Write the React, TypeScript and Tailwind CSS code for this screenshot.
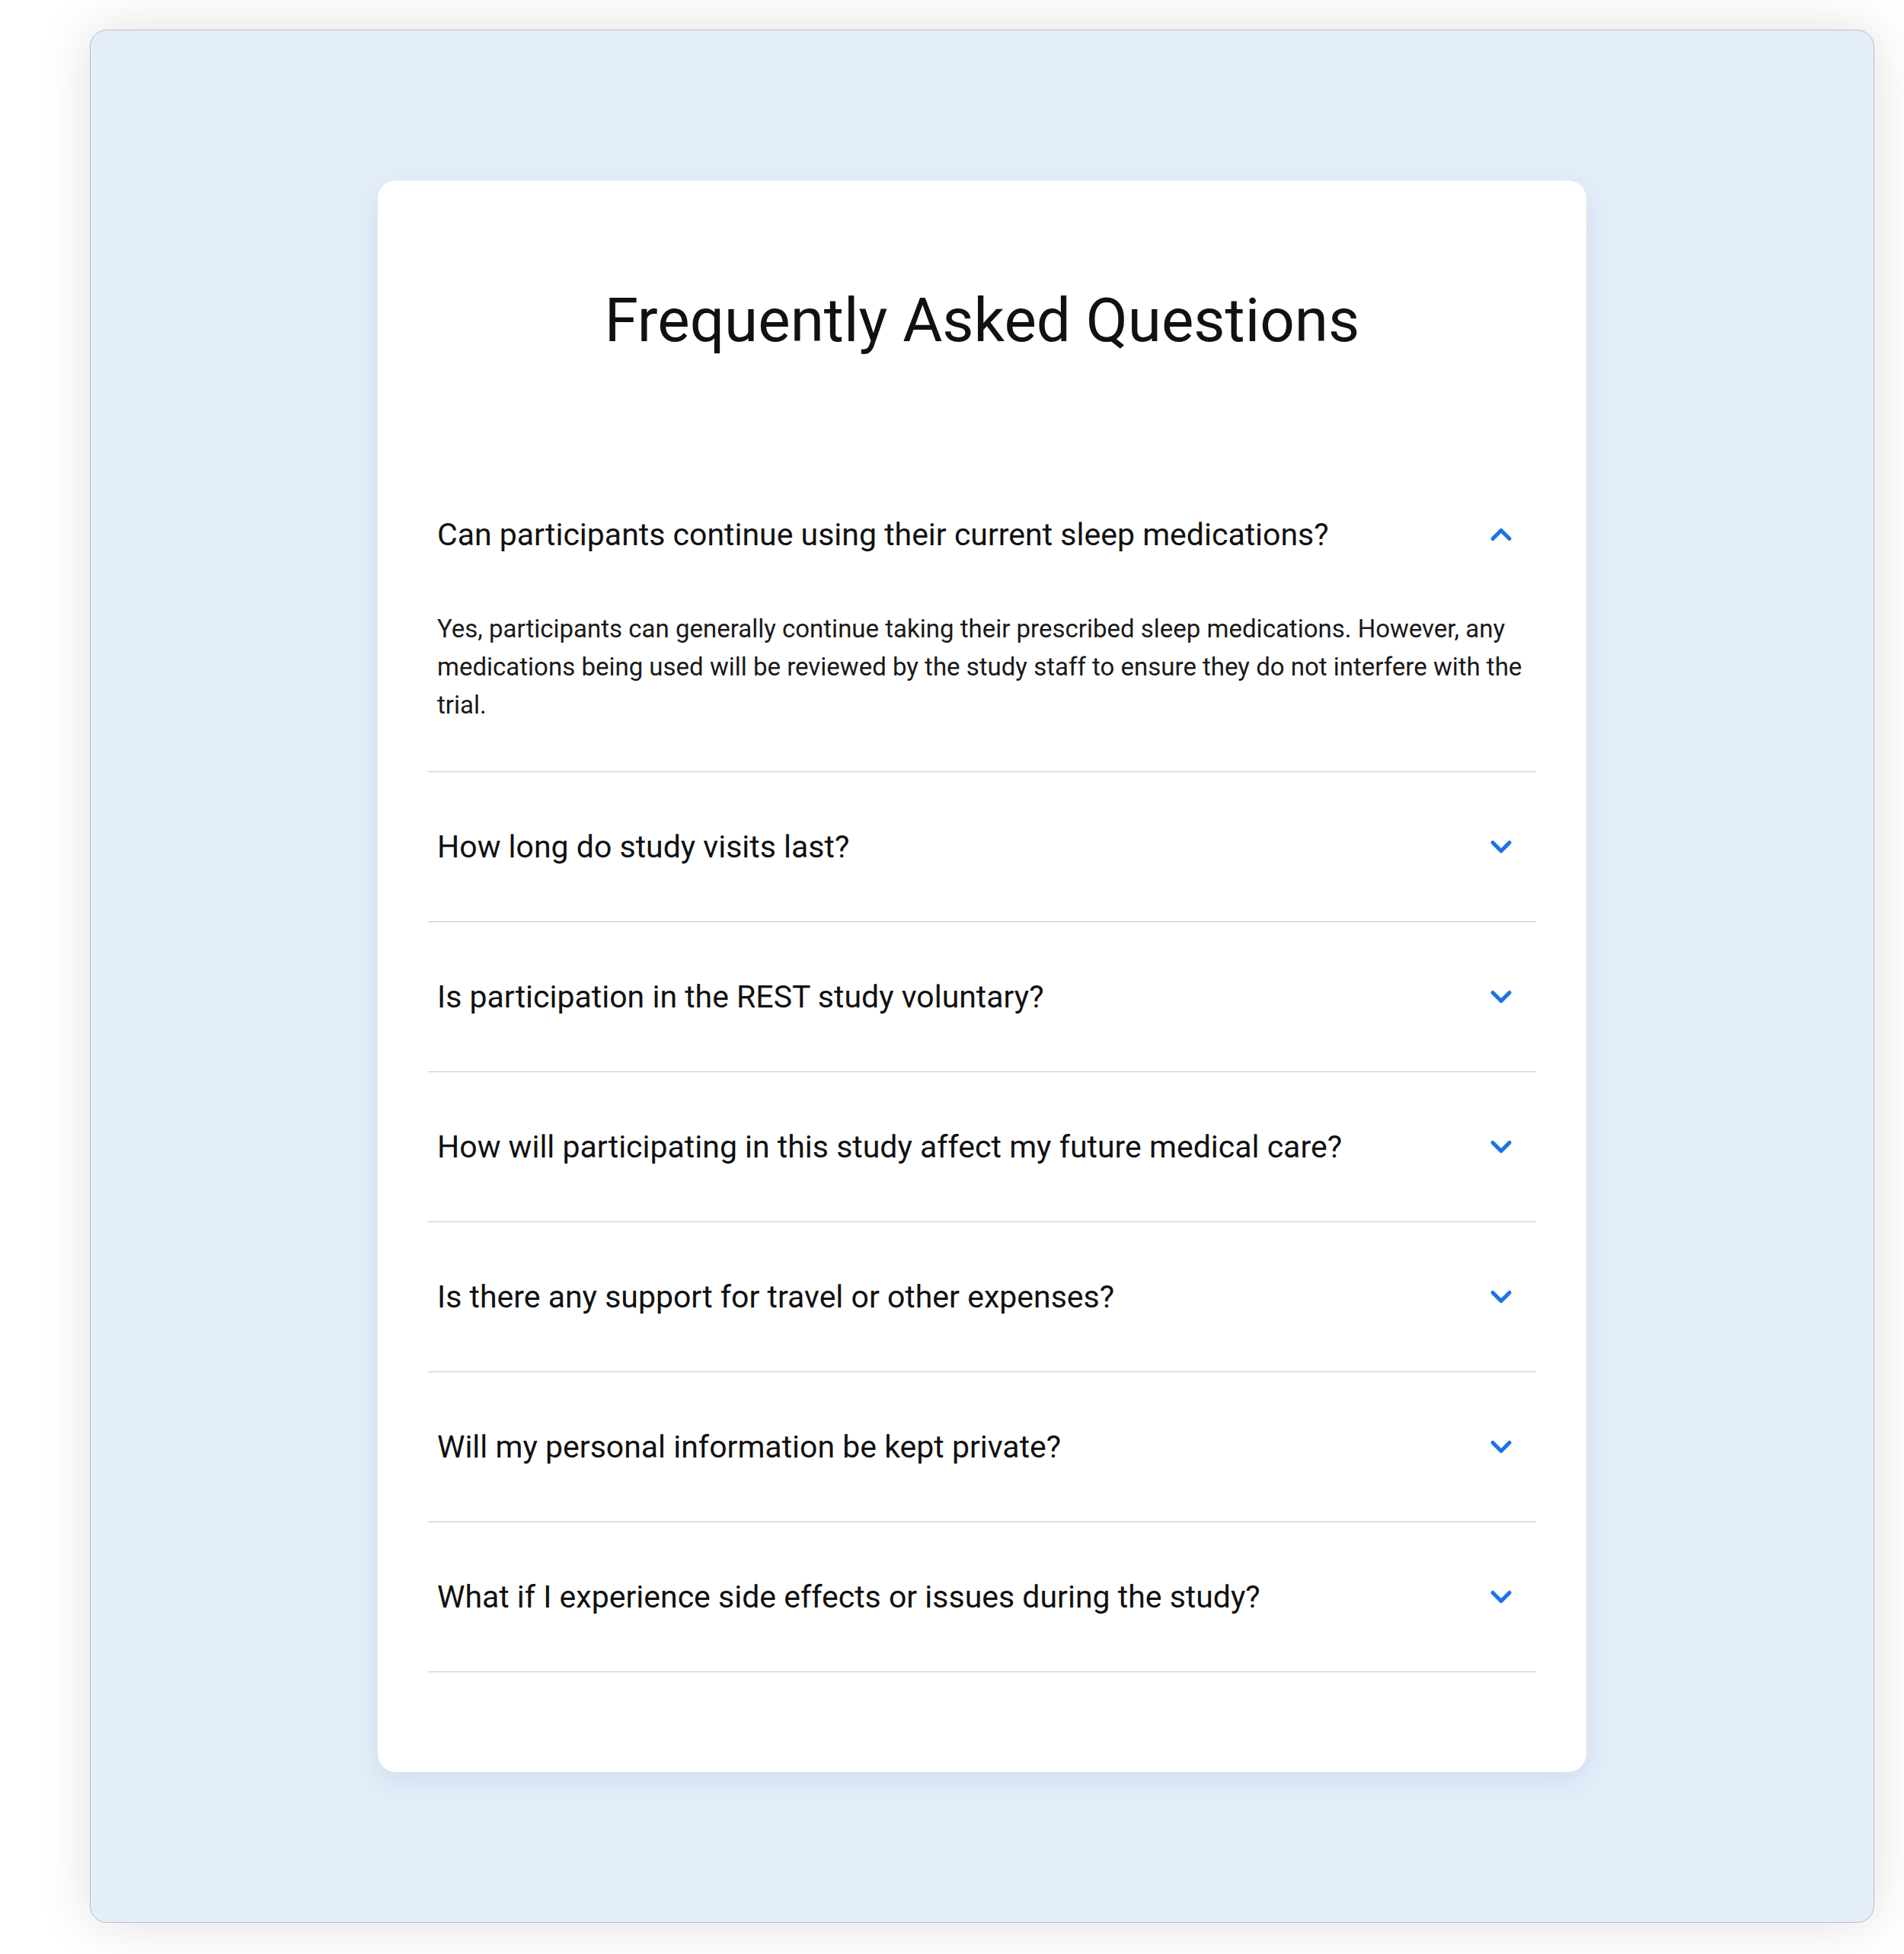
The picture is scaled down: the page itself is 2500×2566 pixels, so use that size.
import { ChevronDown, ChevronUp } from 'lucide-react';

interface FaqItem {
  id: number;
  question: string;
  answer: string;
}

const faqs: FaqItem[] = [
  {
    id: 1,
    question: 'Can participants continue using their current sleep medications?',
    answer:
      'Yes, participants can generally continue taking their prescribed sleep medications. However, any medications being used will be reviewed by the study staff to ensure they do not interfere with the trial.'
  },
  { id: 2, question: 'How long do study visits last?', answer: '' },
  { id: 3, question: 'Is participation in the REST study voluntary?', answer: '' },
  { id: 4, question: 'How will participating in this study affect my future medical care?', answer: '' },
  { id: 5, question: 'Is there any support for travel or other expenses?', answer: '' },
  { id: 6, question: 'Will my personal information be kept private?', answer: '' },
  { id: 7, question: 'What if I experience side effects or issues during the study?', answer: '' }
];

export default function App() {
  const openId = 1;

  return (
    <div className="w-[2500px] h-[2566px] bg-white pt-[39px] pl-[118px] pr-[39px] pb-[41px] font-['Roboto','Liberation_Sans',sans-serif]">
      <div className="h-full rounded-[22px] border border-[#b9bec6] bg-[#e4eefa] shadow-[0_0_70px_rgba(0,0,0,0.13)] pt-[197px] flex justify-center">
        <div className="w-[1587px] self-start rounded-[24px] bg-white px-[66px] pt-[136px] pb-[131px] shadow-[0_12px_36px_rgba(40,70,130,0.10)]">
          <h1 className="text-center text-[80px] leading-[96px] font-normal text-[#111111] mb-[135px]">
            Frequently Asked Questions
          </h1>

          <div>
            {faqs.map((faq) => {
              const isOpen = faq.id === openId;
              return (
                <div key={faq.id} className="border-b border-[#c6c6c6]">
                  <button className="w-full flex items-center justify-between pl-[12px] pr-[24px] py-[68px] text-left">
                    <span className="text-[41px] leading-[60px] text-[#111111]">{faq.question}</span>
                    {isOpen ? (
                      <ChevronUp className="w-[44px] h-[44px] text-[#1a73e8] shrink-0" strokeWidth={2.75} />
                    ) : (
                      <ChevronDown className="w-[44px] h-[44px] text-[#1a73e8] shrink-0" strokeWidth={2.75} />
                    )}
                  </button>
                  {isOpen && (
                    <div className="pl-[12px] pr-[14px] pt-[1px] pb-[62px]">
                      <p className="text-[33px] leading-[50px] text-[#1a1a1a]">{faq.answer}</p>
                    </div>
                  )}
                </div>
              );
            })}
          </div>
        </div>
      </div>
    </div>
  );
}
